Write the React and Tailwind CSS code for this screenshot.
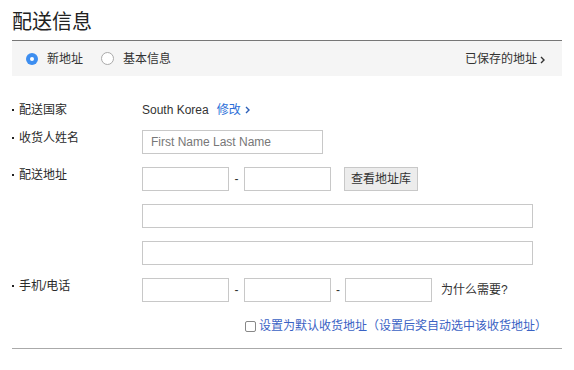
export default function App() {
  const font = { fontFamily: '"Liberation Sans", Arial, "Noto Sans CJK SC", sans-serif' };
  const inputCls = "block h-[24px] border border-[#c8c8c8] bg-white";
  const Label = ({ children }) => (
    <div className="w-[130px] shrink-0 flex items-center h-[16px] text-[12px] leading-[16px] text-[#2a2a2a]">
      <span className="w-[2px] h-[2px] bg-[#222] shrink-0" />
      <span className="ml-[5px]">{children}</span>
    </div>
  );
  const Dash = ({ w = "w-[15px]" }) => <span className={w + " text-center text-[12px] text-[#333] leading-[24px]"}>-</span>;
  const Chevron = ({ color, cls }) => (
    <svg width="5" height="8" viewBox="0 0 5 8" className={cls}>
      <path d="M1 1 L4 4 L1 7" fill="none" stroke={color} strokeWidth="1.4" />
    </svg>
  );
  return (
    <div className="w-[574px] h-[370px] bg-white px-[12px]" style={font}>
      <div className="h-[40px] pt-[8px] text-[20px] leading-[29px] text-[#222]">配送信息</div>
      <div className="h-[36px] border-t border-[#777] bg-[#f5f5f5] flex items-center pl-[14px] pr-[17px] text-[12px] text-[#333]">
        <span className="w-[12px] h-[12px] rounded-full bg-[#3d8ef0] flex items-center justify-center">
          <span className="w-[4px] h-[4px] rounded-full bg-white" />
        </span>
        <span className="ml-[9px]">新地址</span>
        <span className="ml-[18px] w-[13px] h-[13px] rounded-full border border-[#aaa] bg-white" />
        <span className="ml-[9px]">基本信息</span>
        <span className="ml-auto">已保存的地址</span>
        <Chevron color="#333" cls="ml-[3px] mt-[3px]" />
      </div>

      <div className="mt-[22px] flex items-center h-[24px]">
        <Label>配送国家</Label>
        <span className="text-[12px] text-[#333]">South Korea</span>
        <span className="ml-[8px] text-[12px] text-[#2c6fd8]">修改</span>
        <Chevron color="#2c5fb8" cls="ml-[4px]" />
      </div>

      <div className="mt-[8px] flex items-start">
        <Label>收货人姓名</Label>
        <div className={inputCls + " w-[181px] pl-[8px] text-[12px] leading-[22px] text-[#777]"}>First Name Last Name</div>
      </div>

      <div className="mt-[13px] flex items-start">
        <Label>配送地址</Label>
        <div className={inputCls + " w-[87px]"} />
        <Dash />
        <div className={inputCls + " w-[87px]"} />
        <div className="ml-[13px] h-[24px] w-[74px] border border-[#c8c8c8] bg-[#ececec] text-[12px] leading-[22px] text-center text-[#333]">查看地址库</div>
      </div>

      <div className="mt-[13px] flex items-start">
        <div className="w-[130px] shrink-0" />
        <div className={inputCls + " w-[391px]"} />
      </div>

      <div className="mt-[13px] flex items-start">
        <div className="w-[130px] shrink-0" />
        <div className={inputCls + " w-[391px]"} />
      </div>

      <div className="mt-[13px] flex items-start">
        <Label>手机/电话</Label>
        <div className={inputCls + " w-[87px]"} />
        <Dash />
        <div className={inputCls + " w-[87px]"} />
        <Dash w="w-[14px]" />
        <div className={inputCls + " w-[87px]"} />
        <span className="ml-[9px] text-[12px] leading-[24px] text-[#333]">为什么需要?</span>
      </div>

      <div className="mt-[16px] flex items-center h-[16px] pl-[233px]">
        <span className="w-[11px] h-[11px] rounded-[2px] border border-[#888] bg-white shrink-0" />
        <span className="ml-[3px] text-[12px] text-[#3a62c4]">设置为默认收货地址（设置后奖自动选中该收货地址）</span>
      </div>

      <div className="mt-[14px] border-t border-[#aaa]" />
    </div>
  );
}
